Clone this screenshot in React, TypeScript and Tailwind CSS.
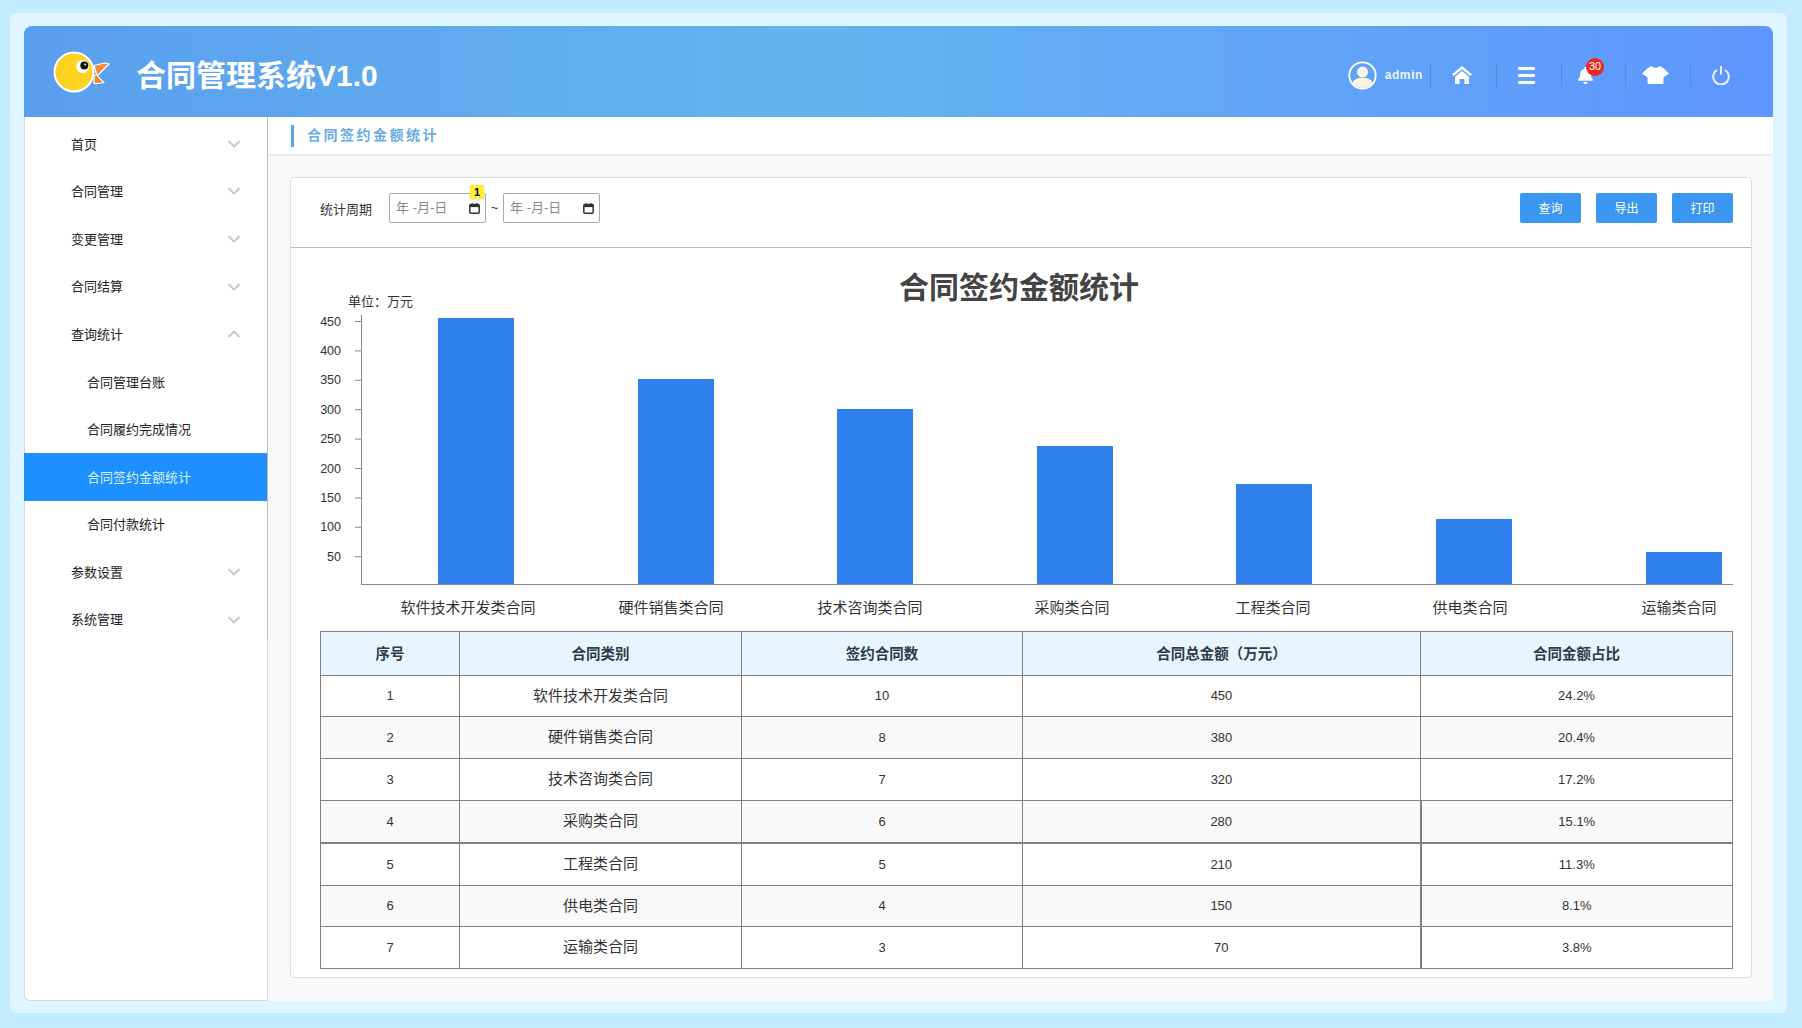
import { ChevronDown, ChevronUp } from "lucide-react";
import { FaBell } from "react-icons/fa";

const menu = [
  { name: "首页" },
  { name: "合同管理" },
  { name: "变更管理" },
  { name: "合同结算" },
  { name: "查询统计", open: true },
  { name: "合同管理台账", sub: true },
  { name: "合同履约完成情况", sub: true },
  { name: "合同签约金额统计", sub: true, active: true },
  { name: "合同付款统计", sub: true },
  { name: "参数设置" },
  { name: "系统管理" },
];

const bars = [
  { name: "软件技术开发类合同", x: 438, w: 76, top: 318, lx: 468 },
  { name: "硬件销售类合同", x: 638, w: 76, top: 379, lx: 671 },
  { name: "技术咨询类合同", x: 837, w: 76, top: 409, lx: 870 },
  { name: "采购类合同", x: 1037, w: 76, top: 446, lx: 1072 },
  { name: "工程类合同", x: 1236, w: 76, top: 484, lx: 1273 },
  { name: "供电类合同", x: 1436, w: 76, top: 519, lx: 1470 },
  { name: "运输类合同", x: 1646, w: 76, top: 552, lx: 1679 },
];

const ticks = [450, 400, 350, 300, 250, 200, 150, 100, 50];

const rows = [
  { id: 1, name: "软件技术开发类合同", count: 10, total: 450, pct: "24.2%", h: "h-[41px]" },
  { id: 2, name: "硬件销售类合同", count: 8, total: 380, pct: "20.4%", h: "h-[42px]" },
  { id: 3, name: "技术咨询类合同", count: 7, total: 320, pct: "17.2%", h: "h-[42px]" },
  { id: 4, name: "采购类合同", count: 6, total: 280, pct: "15.1%", h: "h-[42px]" },
  { id: 5, name: "工程类合同", count: 5, total: 210, pct: "11.3%", h: "h-[43px]" },
  { id: 6, name: "供电类合同", count: 4, total: 150, pct: "8.1%", h: "h-[41px]" },
  { id: 7, name: "运输类合同", count: 3, total: 70, pct: "3.8%", h: "h-[42px]" },
];

function Logo() {
  return (
    <svg width="64" height="48" viewBox="0 0 64 48" className="shrink-0">
      <path d="M41 17.5 L52 15 Q55 15 56 16 Q50 22 44 28 Z" fill="#f08a3c" stroke="#fff" strokeWidth="1.2" strokeLinejoin="round" />
      <path d="M41 27.5 L44 27 Q47 31 51 34.5 Q46 36 41 35.5 Z" fill="#f08a3c" stroke="#fff" strokeWidth="1.2" strokeLinejoin="round" />
      <circle cx="21" cy="24" r="19.5" fill="#fbd320" stroke="#fff" strokeWidth="2" />
      <circle cx="29.7" cy="18.5" r="6.5" fill="#fff" />
      <circle cx="31.3" cy="17.5" r="4" fill="#111" />
      <circle cx="32.3" cy="16.5" r="0.9" fill="#fff" />
    </svg>
  );
}

function Avatar() {
  return (
    <svg width="29" height="29" viewBox="0 0 29 29">
      <defs>
        <clipPath id="avatar-clip">
          <circle cx="14.5" cy="14.5" r="12.5" />
        </clipPath>
      </defs>
      <circle cx="14.5" cy="14.5" r="13.2" fill="none" stroke="#fff" strokeWidth="1.8" />
      <g clipPath="url(#avatar-clip)" fill="#fdf3e4">
        <circle cx="14.5" cy="11" r="5.5" />
        <path d="M3 29 Q3 18 11 17 L18 17 Q26 18 26 29 Z" />
      </g>
    </svg>
  );
}

function HomeIcon() {
  return (
    <svg width="20" height="18" viewBox="0 0 20 18" fill="#fff">
      <path d="M10 0 L20 8.2 L18.4 10 L10 3.2 L1.6 10 L0 8.2 Z" />
      <path d="M10 5 L17 10.8 V18 H12.4 V13 H7.6 V18 H3 V10.8 Z" />
    </svg>
  );
}

function ShirtIcon() {
  return (
    <svg width="27" height="18" viewBox="0 0 27 18" fill="#fff" stroke="#fff" strokeWidth="1" strokeLinejoin="round">
      <path d="M9 0.6 Q13.5 3.8 18 0.6 Q22 2.5 26.4 7.6 L21 11 V17.4 H6 V11 L0.6 7.6 Q5 2.5 9 0.6 Z" />
    </svg>
  );
}

function PowerIcon() {
  return (
    <svg width="18" height="20" viewBox="0 0 18 20" fill="none" stroke="#e3f1ff" strokeWidth="2">
      <path d="M5 5 A7.8 7.8 0 1 0 13 5" />
      <path d="M9 1 V9.5" />
    </svg>
  );
}

function CalendarIcon() {
  return (
    <svg width="11" height="11" viewBox="0 0 11 11" className="shrink-0">
      <rect x="0.8" y="1.5" width="9.4" height="8.7" rx="1" fill="none" stroke="#333" strokeWidth="1.5" />
      <rect x="0.8" y="1.5" width="9.4" height="2.6" fill="#333" />
      <rect x="2.5" y="0" width="1.2" height="2" fill="#333" />
      <rect x="7.3" y="0" width="1.2" height="2" fill="#333" />
    </svg>
  );
}

function DateBox({ badge }: { badge?: boolean }) {
  return (
    <div className="relative flex h-[30px] w-[97px] items-center justify-between rounded-[2px] border border-[#aaa] bg-white pl-[6px] pr-[5px] text-[13px] text-[#888]">
      <span>年 -月-日</span>
      <CalendarIcon />
      {badge && (
        <span className="absolute left-[80px] top-[-9px] flex h-[14px] w-[14px] items-center justify-center bg-[#ffee33] text-[11px] font-bold leading-none text-black shadow-sm">
          1
        </span>
      )}
    </div>
  );
}

function Chart() {
  return (
    <svg viewBox="291 248 1460 383" width="1460" height="383" className="block">
      <text x="1019" y="298" textAnchor="middle" fontSize="30" fontWeight="700" fill="#444">
        合同签约金额统计
      </text>
      <text x="348" y="306" fontSize="13" fill="#333">
        单位：万元
      </text>
      <path d="M361.5 315 V584.5 H1733" fill="none" stroke="#888" strokeWidth="1" />
      {ticks.map((t, i) => (
        <g key={t}>
          <path d={`M355 ${321.5 + i * 29.4} H361`} stroke="#888" strokeWidth="1" />
          <text x="341" y={325.5 + i * 29.4} textAnchor="end" fontSize="12.5" fill="#333">
            {t}
          </text>
        </g>
      ))}
      {bars.map((b) => (
        <g key={b.name}>
          <rect x={b.x} y={b.top} width={b.w} height={584 - b.top} fill="#2f80ed" />
          <text x={b.lx} y="613" textAnchor="middle" fontSize="15" fill="#333">
            {b.name}
          </text>
        </g>
      ))}
    </svg>
  );
}

export default function App() {
  return (
    <div className="h-[1028px] w-[1802px] overflow-hidden bg-[#c4ecff] pb-[15px] pl-[10px] pr-[15px] pt-[13px] font-['Liberation_Sans','Noto_Sans_CJK_SC',sans-serif] text-[#333]">
      <div className="h-full rounded-[6px] bg-[#dff5ff] px-[14px] pb-[12px] pt-[13px]">
        <div className="flex h-full flex-col">
          <header className="flex h-[91px] shrink-0 items-center justify-between rounded-t-[8px] bg-linear-to-r from-[#5a9fee] via-[#63b4ee] via-45% to-[#5f95ff] pl-[29px] pr-[19px]">
            <div className="flex items-center">
              <Logo />
              <h1 className="ml-[19px] mt-[9px] text-[30px] font-bold leading-none text-white">合同管理系统V1.0</h1>
            </div>
            <div className="mt-[7px] flex items-center">
              <Avatar />
              <span className="ml-[8px] mr-[7px] text-[12px] font-bold tracking-[0.6px] text-[#eaf5ff]">admin</span>
              <div className="flex h-[23px] w-[66px] items-center justify-center border-l border-[#4b8fd6] pr-[4px]">
                <HomeIcon />
              </div>
              <div className="flex h-[23px] w-[65px] items-center justify-center border-l border-[#4b8fd6] pr-[5px]">
                <div className="flex w-[17px] flex-col gap-[4px]">
                  <span className="h-[3px] rounded-[1px] bg-white" />
                  <span className="h-[3px] rounded-[1px] bg-white" />
                  <span className="h-[3px] rounded-[1px] bg-white" />
                </div>
              </div>
              <div className="flex h-[23px] w-[64px] items-center justify-center border-l border-[#4b8fd6] pr-[16px]">
                <div className="relative">
                  <FaBell className="text-[17px] text-white" />
                  <span className="absolute left-[9px] top-[-9px] flex h-[18px] w-[18px] items-center justify-center rounded-full bg-[#e8281a] text-[11px] leading-none text-white">
                    30
                  </span>
                </div>
              </div>
              <div className="flex h-[23px] w-[65px] items-center justify-center border-l border-[#4b8fd6] pr-[5px]">
                <ShirtIcon />
              </div>
              <div className="flex h-[23px] w-[64px] items-center justify-center border-l border-[#4b8fd6] pr-[3px]">
                <PowerIcon />
              </div>
            </div>
          </header>

          <div className="flex min-h-0 flex-1">
            <aside className="w-[244px] shrink-0 rounded-bl-[6px] border-b border-l border-r border-[#d8d8d8] bg-white">
              <nav className="-ml-px -mr-px h-[523px] border-r border-[#bbb] pt-[3px]">
                {menu.map((m) => (
                  <div
                    key={m.name}
                    className={
                      "flex h-[47.6px] items-center justify-between pr-[23px] text-[13px] " +
                      (m.sub ? "pl-[63px] " : "pl-[47px] ") +
                      (m.active ? "bg-[#1e8fff] text-[#d6f2ff]" : "text-[#222]")
                    }
                  >
                    <span className="pt-[1px]">{m.name}</span>
                    {!m.sub &&
                      (m.open ? (
                        <ChevronUp size={20} strokeWidth={2.4} className="text-[#c8c8c8]" />
                      ) : (
                        <ChevronDown size={20} strokeWidth={2.4} className="text-[#c8c8c8]" />
                      ))}
                  </div>
                ))}
              </nav>
            </aside>

            <main className="flex min-w-0 flex-1 flex-col bg-[#f8f8f8]">
              <div className="flex h-[39px] shrink-0 items-center border-b-2 border-[#ececec] bg-white pl-[23px]">
                <span className="h-[22px] w-[3px] bg-[#5aa5e0]" />
                <span className="ml-[13px] text-[14px] font-bold tracking-[2.5px] text-[#66ade6]">合同签约金额统计</span>
              </div>

              <div className="min-h-0 flex-1 pb-[23px] pl-[22px] pr-[21px] pt-[21px]">
                <section className="h-full rounded-[4px] border border-[#ddd] bg-white">
                  <div className="flex h-[70px] items-center justify-between border-b border-[#bbb] pb-[9px] pl-[29px] pr-[18px]">
                    <div className="flex items-center">
                      <span className="mt-[4px] text-[13px] text-[#333]">统计周期</span>
                      <div className="ml-[17px]">
                        <DateBox badge />
                      </div>
                      <span className="mx-[3px] w-[11px] text-center text-[13px]">~</span>
                      <DateBox />
                    </div>
                    <div className="flex gap-[15px]">
                      {["查询", "导出", "打印"].map((t) => (
                        <button key={t} className="h-[30px] w-[61px] rounded-[2px] bg-[#3a96f0] pt-[2px] text-[12px] text-white">
                          {t}
                        </button>
                      ))}
                    </div>
                  </div>

                  <Chart />

                  <div className="ml-[29px] w-[1412px]">
                    <table className="w-full table-fixed border-collapse text-center text-[15px] text-[#333]">
                      <colgroup>
                        <col className="w-[139px]" />
                        <col className="w-[282px]" />
                        <col className="w-[281px]" />
                        <col className="w-[398px]" />
                        <col className="w-[312px]" />
                      </colgroup>
                      <thead>
                        <tr className="h-[44px] bg-[#e8f5ff] text-[14.5px] font-bold text-[#2f3a45]">
                          <th className="border border-[#808080] pt-[2px]">序号</th>
                          <th className="border border-[#808080] pt-[2px]">合同类别</th>
                          <th className="border border-[#808080] pt-[2px]">签约合同数</th>
                          <th className="border border-[#808080] pt-[2px]">合同总金额（万元）</th>
                          <th className="border border-[#808080] pt-[2px]">合同金额占比</th>
                        </tr>
                      </thead>
                      <tbody>
                        {rows.map((r) => {
                          const top = r.id === 5 ? " border-t-2" : "";
                          return (
                            <tr key={r.id} className={r.h + (r.id % 2 === 0 ? " bg-[#f9f9f9]" : " bg-white")}>
                              <td className={"border border-[#808080] text-[13px]" + top}>{r.id}</td>
                              <td className={"border border-[#808080]" + top}>{r.name}</td>
                              <td className={"border border-[#808080] text-[13px]" + top}>{r.count}</td>
                              <td className={"border border-[#808080] text-[13px]" + top}>{r.total}</td>
                              <td className={"border border-[#808080] text-[13px]" + top + (r.id >= 4 ? " border-l-2" : "")}>{r.pct}</td>
                            </tr>
                          );
                        })}
                      </tbody>
                    </table>
                  </div>
                </section>
              </div>
            </main>
          </div>
        </div>
      </div>
    </div>
  );
}
